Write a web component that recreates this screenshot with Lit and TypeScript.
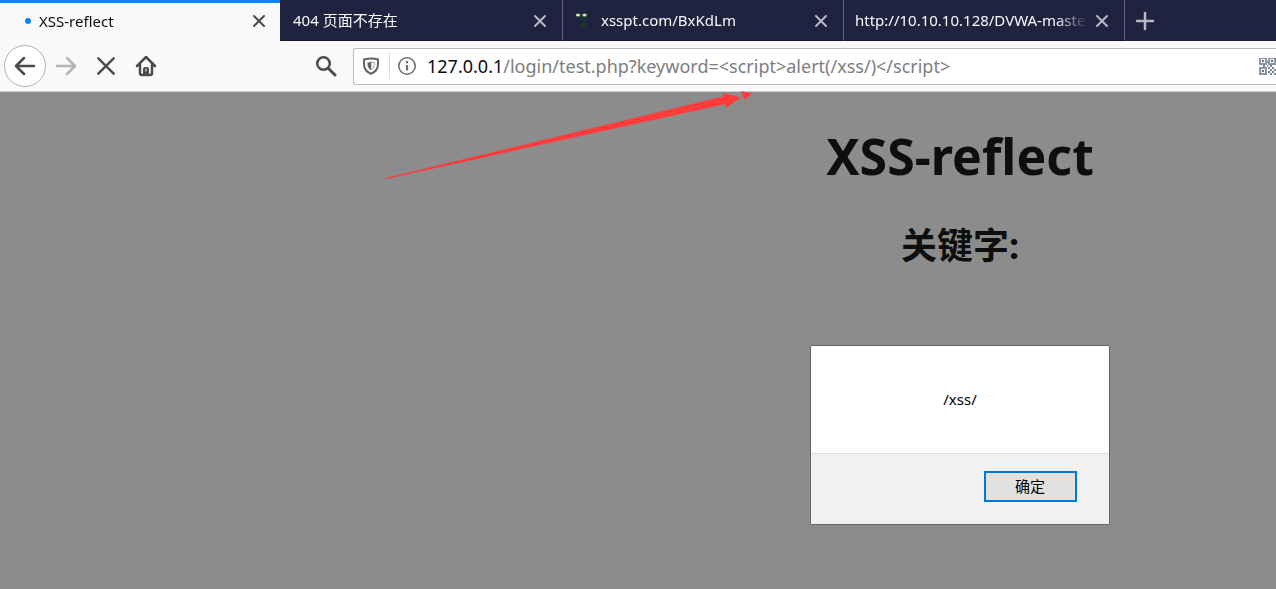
import { LitElement, html, css, svg, nothing } from "lit";
import { customElement, property } from "lit/decorators.js";

const cross = (size: number, reach: number, width: number) => svg`
  <svg width=${size} height=${size} viewBox="0 0 20 20" fill="none" stroke="currentColor"
    stroke-width=${width} stroke-linecap="round">
    <path d="M${10 - reach} ${10 - reach}L${10 + reach} ${10 + reach}M${10 + reach} ${10 - reach}L${10 - reach} ${10 + reach}" />
  </svg>`;

const catIcon = svg`
  <svg width="18" height="18" viewBox="0 0 18 18">
    <path fill="#1c3331" d="M3 2l3 1h5l3-1v6l-2 1 1 4v4H6v-3l2-3-1-3-3-1z" opacity=".8" />
    <ellipse cx="4" cy="4" rx="2.2" ry="1.5" fill="#b9dc7a" />
    <ellipse cx="10.500" cy="4" rx="2.200" ry="1.500" fill="#b9dc7a" />
    <circle cx="4" cy="4" r=".8" fill="#fff" />
    <circle cx="10.500" cy="4" r=".8" fill="#fff" />
  </svg>`;

const finder = (x: number, y: number) => svg`
  <rect x=${x + 1} y=${y + 1} width="6" height="6" fill="#f4f6f8" stroke="#8b96a2" stroke-width="2" />
  <rect x=${x + 3} y=${y + 3} width="2" height="2" fill="#66727f" />`;

const qrIcon = svg`
  <svg width="18" height="18" viewBox="0 0 18 18" shape-rendering="crispEdges">
    ${finder(0, 0)}${finder(10, 0)}${finder(0, 10)}
    <path fill="#77828e" d="M4 8h2v2H4zM8 8h2v2H8zM12 8h2v2h-2zM10 10h2v2h-2zM14 10h2v2h-2zM12 12h2v2h-2zM16 12h2v2h-2zM10 14h2v2h-2zM14 14h2v2h-2zM12 16h2v2h-2zM16 16h2v2h-2zM8 4h2v2H8z" />
  </svg>`;

@customElement("browser-tab")
class BrowserTab extends LitElement {
  @property() label = "";
  @property({ type: Boolean, reflect: true }) active = false;
  @property() icon = "";

  static styles = css`
    :host {
      display: flex;
      align-items: center;
      box-sizing: border-box;
      flex: 0 0 281px;
      min-width: 0;
      height: 41px;
      padding: 0 12px 0 11px;
      gap: 4px;
      color: #f9f9fa;
      background: #202340;
      border-right: 1px solid #63657a;
      border-bottom: 1px solid #14162f;
    }
    :host([active]) {
      flex-basis: 280px;
      margin-right: 2px;
      padding: 0 11px 3px 24px;
      color: #0c0c0d;
      background: #f9f9fa;
      border: 0;
      border-top: 3px solid #0a84ff;
    }
    .dot {
      width: 6px;
      height: 6px;
      margin: 0 4px 0 1px;
      border-radius: 50%;
      background: #0a84ff;
      flex: none;
    }
    .icon {
      display: flex;
      margin-right: 5px;
    }
    .label {
      flex: 1;
      min-width: 0;
      overflow: hidden;
      white-space: nowrap;
      font-size: 15px;
      line-height: 20px;
      mask-image: linear-gradient(to left, transparent, #000 32px);
    }
    .close {
      display: flex;
      padding: 1px 0 0;
      border: 0;
      background: none;
      color: #b8b9c4;
    }
    :host([active]) .close {
      color: #4a4a4f;
    }
  `;

  render() {
    return html`
      ${this.active ? html`<span class="dot"></span>` : nothing}
      ${this.icon === "cat" ? html`<span class="icon">${catIcon}</span>` : nothing}
      <span class="label">${this.label}</span>
      <button class="close" aria-label="关闭标签页">${cross(20, 5, 2)}</button>
    `;
  }
}

@customElement("alert-dialog")
class AlertDialog extends LitElement {
  @property() message = "";

  static styles = css`
    :host {
      display: block;
      width: 298px;
      border: 1px solid #666;
      border-radius: 2px;
      background: #fff;
      color: #000;
      font-size: 15px;
      line-height: 20px;
      overflow: hidden;
    }
    .message {
      margin: 0;
      padding: 43px 16px 44px;
      text-align: center;
    }
    .actions {
      display: flex;
      justify-content: flex-end;
      padding: 17px 32px 22px;
      border-top: 1px solid #dfdfdf;
      background: #f1f1f1;
    }
    .ok {
      width: 93px;
      height: 31px;
      padding: 0 1px 2px 0;
      border: 2px solid #0078d7;
      background: #e1e1e1;
      color: #000;
      font: inherit;
    }
  `;

  render() {
    return html`
      <p class="message">${this.message}</p>
      <div class="actions"><button class="ok">确定</button></div>
    `;
  }
}

@customElement("app-root")
class AppRoot extends LitElement {
  static styles = css`
    :host {
      display: flex;
      flex-direction: column;
      min-height: 100vh;
      overflow: hidden;
      font-family: "Noto Sans", "Noto Sans CJK SC", sans-serif;
      background: #8c8c8c;
    }
    .tabs {
      display: flex;
      background: #202340;
    }
    .new {
      display: flex;
      align-items: center;
      padding: 0 10px;
      border: 0;
      background: none;
      color: #b8b9c4;
    }
    .toolbar {
      display: flex;
      align-items: center;
      height: 50px;
      background: #f9f9fa;
      border-bottom: 1px solid #ccc;
      color: #4a4a4f;
    }
    .tool {
      display: flex;
      align-items: center;
      justify-content: center;
      width: 40px;
      height: 40px;
      padding: 0;
      border: 0;
      background: none;
      color: inherit;
    }
    .back {
      box-sizing: border-box;
      width: 42px;
      height: 42px;
      margin-left: 4px;
      border: 1px solid #b1b1b3;
      border-radius: 50%;
      background: #fff;
    }
    .forward {
      color: #b5b5b7;
    }
    .search {
      margin-left: 140px;
    }
    .address {
      display: flex;
      align-items: center;
      flex: 1;
      min-width: 0;
      box-sizing: border-box;
      height: 37px;
      margin-left: 7px;
      border: 1px solid #bdbdbe;
      border-right: 0;
      border-radius: 3px 0 0 3px;
      background: #fff;
      overflow: hidden;
      font-size: 18px;
      line-height: 24px;
    }
    .badge {
      display: flex;
      padding: 4px 9px 4px 8px;
      border-right: 1px solid #dcdcdc;
      color: #636366;
    }
    .info {
      display: flex;
      padding: 0 10px 0 7px;
      color: #6f6f72;
    }
    .host {
      color: #0c0c0d;
    }
    .path {
      flex: 1;
      min-width: 0;
      padding: 0;
      border: 0;
      outline: 0;
      background: none;
      color: #7d7d7f;
      font: inherit;
    }
    .qr {
      display: flex;
      width: 17px;
      overflow: hidden;
    }
    .page {
      position: relative;
      display: flex;
      flex-direction: column;
      align-items: center;
      flex: 1;
      padding-left: 644px;
      color: #0e0e0e;
    }
    .title,
    .subtitle {
      margin: 0;
      font-weight: 700;
    }
    .title {
      margin-top: 32px;
      font-size: 50px;
      line-height: 64px;
    }
    .subtitle {
      margin: 34px 0 75px;
      font-size: 36px;
      line-height: 48px;
    }
    .arrow {
      position: absolute;
      left: 384px;
      top: -1px;
    }
  `;

  render() {
    return html`
      <nav class="tabs">
        <browser-tab active label="XSS-reflect"></browser-tab>
        <browser-tab label="404 页面不存在"></browser-tab>
        <browser-tab icon="cat" label="xsspt.com/BxKdLm"></browser-tab>
        <browser-tab label="http://10.10.10.128/DVWA-maste"></browser-tab>
        <button class="new" aria-label="新建标签页">
          <svg width="20" height="20" viewBox="0 0 20 20" fill="none" stroke="currentColor" stroke-width="2.500" stroke-linecap="round">
            <path d="M10 2v16M2 10h16" />
          </svg>
        </button>
      </nav>
      <div class="toolbar">
        <button class="tool back" aria-label="后退">
          <svg width="24" height="24" viewBox="0 0 24 24" fill="none" stroke="currentColor" stroke-width="2.500" stroke-linecap="round" stroke-linejoin="round">
            <path d="M21 12H3M11 4L3 12l8 8" />
          </svg>
        </button>
        <button class="tool forward" aria-label="前进">
          <svg width="24" height="24" viewBox="0 0 24 24" fill="none" stroke="currentColor" stroke-width="2.500" stroke-linecap="round" stroke-linejoin="round">
            <path d="M3 12h18M13 4l8 8-8 8" />
          </svg>
        </button>
        <button class="tool" aria-label="停止">${cross(22, 7, 2.2)}</button>
        <button class="tool" aria-label="主页">
          <svg width="22" height="22" viewBox="0 0 22 22" fill="none" stroke="currentColor" stroke-width="2.500" stroke-linecap="round" stroke-linejoin="round">
            <path d="M2 11l9-9 9 9M5 10v8q0 2 2 2h8q2 0 2-2v-8" />
            <path d="M8 20v-6q0-2 2-2h2q2 0 2 2v6z" fill="currentColor" stroke="none" />
            <path d="M11 14v2" stroke="#bbb" stroke-width="1.500" />
          </svg>
        </button>
        <button class="tool search" aria-label="搜索">
          <svg width="22" height="22" viewBox="0 0 22 22" fill="none" stroke="currentColor" stroke-width="2.500" stroke-linecap="round">
            <circle cx="8.500" cy="8.500" r="6.300" />
            <path d="M13.500 13.500L20 20" stroke-width="3" />
          </svg>
        </button>
        <div class="address">
          <span class="badge">
            <svg width="18" height="18" viewBox="0 0 18 18" fill="none" stroke="currentColor" stroke-width="2">
              <path d="M9 1.500Q12.500 1.500 16 2.500V7Q16 14 9 16.800 2 14 2 7V2.500Q5.500 1.500 9 1.500z" stroke-linejoin="round" />
              <path d="M9 5L5.500 5.500V7Q5.500 11 9 13z" fill="currentColor" stroke="none" />
              <path d="M9 5L12.500 5.500V7Q12.500 11 9 13z" stroke-width=".6" />
            </svg>
          </span>
          <span class="info">
            <svg width="20" height="20" viewBox="0 0 20 20" fill="none" stroke="currentColor" stroke-width="1.600">
              <circle cx="10" cy="10" r="8.200" />
              <path d="M10 9v5.500M10 5v2.200" stroke-width="2.200" />
            </svg>
          </span>
          <label class="host" for="path">127.0.0.1</label>
          <input class="path" id="path" type="text" value="/login/test.php?keyword=&lt;script&gt;alert(/xss/)&lt;/script&gt;" />
          <span class="qr">${qrIcon}</span>
        </div>
      </div>
      <main class="page">
        <h1 class="title">XSS-reflect</h1>
        <h2 class="subtitle">关键字:</h2>
        <alert-dialog message="/xss/"></alert-dialog>
        <svg class="arrow" width="370" height="92" viewBox="384 91 370 92" fill="#ff3b3b">
          <path d="M385.500 178L723 96.500V93L741 97.500 726 108V104L386 179z" />
          <path d="M741 91L752 93.500 744.500 100z" />
        </svg>
      </main>
    `;
  }
}
